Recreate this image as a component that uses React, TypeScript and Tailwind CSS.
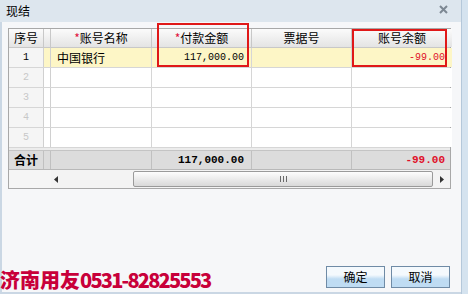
import React from 'react';

const cjk = { fontFamily: '"Noto Sans CJK SC", "Noto Sans", sans-serif' };
const mono = { fontFamily: '"Liberation Mono", "DejaVu Sans Mono", monospace' };

const cols = 'grid grid-cols-[35px_7px_101px_100px_100px_100px]';

const HeaderCell: React.FC<{ children?: React.ReactNode; star?: boolean }> = ({ children, star }) => (
  <div
    className="flex items-center justify-center border-r border-[#c8c8c8] bg-gradient-to-b from-[#fbfbfb] to-[#e4e4e4] text-[12px] leading-none text-black"
    style={cjk}
  >
    {star && <span className="text-[#e0103c]">*</span>}
    {children}
  </div>
);

const rows = [1, 2, 3, 4, 5];

export default function App() {
  return (
    <div className="relative flex h-[294px] w-[468px] overflow-hidden bg-[#dbe6f0]">
      <div className="flex w-[461px] flex-col">
        {/* title bar */}
        <div className="flex h-[22px] items-center justify-between bg-[#dde6ee] pl-[6px] pr-[13px]">
          <span className="text-[12px] leading-none text-black" style={cjk}>
            现结
          </span>
          <svg width="9" height="9" viewBox="0 0 9 9" className="mt-[-4px]">
            <path d="M1 1L8 8M8 1L1 8" stroke="#7d8893" strokeWidth="2" />
          </svg>
        </div>

        {/* body */}
        <div className="flex flex-1 flex-col border-l-[2px] border-b-[2px] border-[#cad7e4] bg-[#f6f7f9] pl-[6px] pt-[6px]">
          <div className="w-[443px] border border-[#a8a8a8]">
            {/* header */}
            <div className={`${cols} h-[19px] border-b border-[#c8c8c8]`}>
              <HeaderCell>序号</HeaderCell>
              <HeaderCell />
              <HeaderCell star>账号名称</HeaderCell>
              <HeaderCell star>付款金额</HeaderCell>
              <HeaderCell>票据号</HeaderCell>
              <div
                className="flex items-center justify-center bg-gradient-to-b from-[#fbfbfb] to-[#e4e4e4] text-[12px] leading-none text-black"
                style={cjk}
              >
                账号余额
              </div>
            </div>

            {/* rows */}
            {rows.map((n) => {
              const first = n === 1;
              return (
                <div key={n} className={`${cols} h-[20px] border-b border-[#d6d6d6]`}>
                  <div
                    className={`flex items-center justify-center border-r border-[#d0d0d0] bg-[#f5f5f5] text-[10px] ${
                      first ? 'text-black' : 'text-[#c8c8c8]'
                    }`}
                    style={mono}
                  >
                    {n}
                  </div>
                  <div className={`border-r border-[#d0d0d0] ${first ? 'bg-[#fdf6c6]' : 'bg-white'}`} />
                  <div
                    className={`flex items-center border-r border-[#d6d6d6] pl-[6px] text-[12px] leading-none text-black ${
                      first ? 'bg-[#fdf6c6]' : 'bg-white'
                    }`}
                    style={cjk}
                  >
                    {first ? '中国银行' : ''}
                  </div>
                  <div
                    className={`flex items-center justify-end border-r border-[#d6d6d6] pr-[7px] text-[10px] leading-none text-black ${
                      first ? 'bg-[#fdf6c6]' : 'bg-white'
                    }`}
                    style={mono}
                  >
                    {first ? '117,000.00' : ''}
                  </div>
                  <div className={`border-r border-[#d6d6d6] ${first ? 'bg-[#fdf6c6]' : 'bg-white'}`} />
                  <div
                    className={`flex items-center justify-end pr-[7px] text-[10px] leading-none text-[#e0102a] ${
                      first ? 'bg-[#fdf6c6]' : 'bg-white'
                    }`}
                    style={mono}
                  >
                    {first ? '-99.00' : ''}
                  </div>
                </div>
              );
            })}

            {/* gap band */}
            <div className="h-[3px] border-b border-[#c4c4c4] bg-[#ececec]" />

            {/* totals */}
            <div className={`${cols} h-[19px] border-b border-[#b8b8b8] bg-[#dcdcdc]`}>
              <div
                className="flex items-center justify-center border-r border-[#c0c0c0] text-[12px] font-bold leading-none text-black"
                style={cjk}
              >
                合计
              </div>
              <div className="border-r border-[#c0c0c0]" />
              <div className="border-r border-[#c0c0c0]" />
              <div
                className="flex items-center justify-end border-r border-[#c0c0c0] pr-[7px] text-[11px] font-bold leading-none text-black"
                style={mono}
              >
                117,000.00
              </div>
              <div className="border-r border-[#c0c0c0]" />
              <div
                className="flex items-center justify-end pr-[7px] text-[11px] font-bold leading-none text-[#e0102a]"
                style={mono}
              >
                -99.00
              </div>
            </div>

            {/* scrollbar */}
            <div className="flex h-[18px] bg-[#f3f3f3]">
              <div className="w-[42px] bg-[#f5f5f5]" />
              <div className="flex w-[82px] items-center pl-[3px]">
                <svg width="4" height="7" viewBox="0 0 4 7">
                  <path d="M4 0L0 3.5L4 7Z" fill="#333" />
                </svg>
              </div>
              <div className="my-[1px] flex w-[300px] items-center justify-center rounded-[2px] border border-[#9a9a9a] bg-gradient-to-b from-[#fdfdfd] to-[#d9d9d9]">
                <svg width="7" height="6" viewBox="0 0 7 6">
                  <path d="M0.5 0V6M3.5 0V6M6.5 0V6" stroke="#6a6a6a" strokeWidth="1" />
                </svg>
              </div>
              <div className="flex flex-1 items-center justify-center">
                <svg width="4" height="7" viewBox="0 0 4 7">
                  <path d="M0 0L4 3.5L0 7Z" fill="#333" />
                </svg>
              </div>
            </div>
          </div>

          {/* buttons */}
          <div className="mt-auto mb-[4px] flex justify-end gap-[6px] pr-[11px]">
            {['确定', '取消'].map((t) => (
              <button
                key={t}
                className="flex h-[22px] w-[59px] items-center justify-center border border-[#6f8ba6] bg-gradient-to-b from-[#f4f9fd] from-40% to-[#bfdcf3] to-60% text-[12px] leading-none text-black"
                style={cjk}
              >
                {t}
              </button>
            ))}
          </div>
        </div>
      </div>

      {/* right frame strip */}
      <div className="w-[7px] border-l border-[#b5c8da] bg-[#d5e3ef]" />

      {/* red highlight boxes */}
      <div className="absolute left-[157px] top-[23px] h-[44px] w-[92px] border-2 border-[#e01818]" />
      <div className="absolute left-[352px] top-[29px] h-[38px] w-[95px] border-2 border-[#e01818]" />

      {/* watermark */}
      <div
        className="absolute bottom-[4px] left-0 whitespace-nowrap text-[20px] font-black leading-none text-[#c8003a]"
        style={cjk}
      >
        济南用友<span className="tracking-[-1.8px]">0531-82825553</span>
      </div>
    </div>
  );
}
